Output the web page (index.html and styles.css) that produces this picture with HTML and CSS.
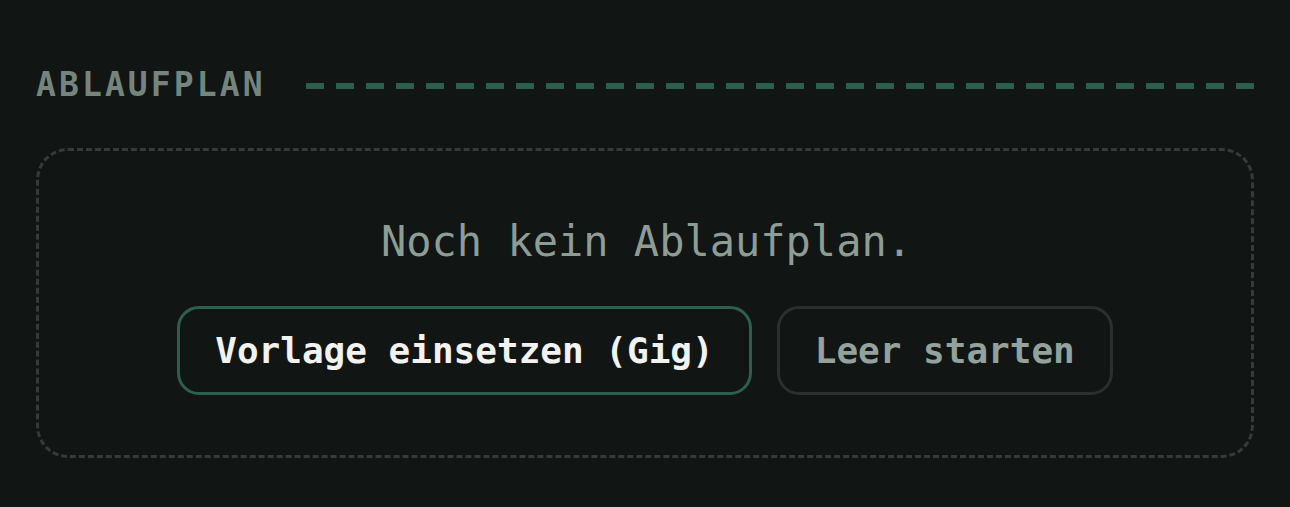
FILE: index.html
```html
<!DOCTYPE html>
<html lang="de">
<head>
<meta charset="utf-8">
<title>Ablaufplan</title>
<link rel="stylesheet" href="styles.css">
</head>
<body>
<main class="page">
  <section class="section">
    <header class="section-head">
      <h2 class="section-title">ABLAUFPLAN</h2>
      <div class="section-rule"></div>
    </header>
    <div class="empty-card">
      <p class="empty-text">Noch kein Ablaufplan.</p>
      <div class="actions">
        <button class="btn btn-primary" type="button">Vorlage einsetzen (Gig)</button>
        <button class="btn btn-secondary" type="button">Leer starten</button>
      </div>
    </div>
  </section>
</main>
</body>
</html>
```
FILE: styles.css
```css
* { box-sizing: border-box; }
html, body {
  margin: 0;
  padding: 0;
  background: #111514;
  height: 100%;
}
body {
  font-family: "DejaVu Sans Mono", "Liberation Mono", monospace;
  color: #8e9e97;
}
.page {
  padding: 65px 36px 0 36px;
}
.section-head {
  display: flex;
  align-items: center;
  gap: 40px;
  height: 40px;
}
.section-title {
  margin: 0;
  font-size: 33px;
  line-height: 40px;
  font-weight: bold;
  letter-spacing: 3.1px;
  color: #76847e;
}
.section-rule {
  flex: 1;
  height: 6px;
  margin-top: 1px;
  background: repeating-linear-gradient(to right, #2c5f4d 0 18px, transparent 18px 30px);
}
.empty-card {
  margin-top: 43px;
  border: 3px dashed #353b39;
  border-radius: 32px;
  padding: 61px 24px 60px;
  display: flex;
  flex-direction: column;
  align-items: center;
}
.empty-text {
  margin: 0;
  font-size: 42px;
  line-height: 60px;
  color: #8d9c95;
  padding-left: 3px;
}
.actions {
  margin-top: 34px;
  display: flex;
  gap: 25px;
}
.btn {
  font-family: "DejaVu Sans Mono", "Liberation Mono", monospace;
  font-size: 36px;
  font-weight: bold;
  height: 89px;
  padding: 0 35px;
  border-radius: 22px;
  background: #111514;
  cursor: pointer;
}
.btn-primary {
  border: 3px solid #2d5f4d;
  color: #f2f3f1;
}
.btn-secondary {
  border: 3px solid #2a302e;
  color: #93a39c;
}
```
